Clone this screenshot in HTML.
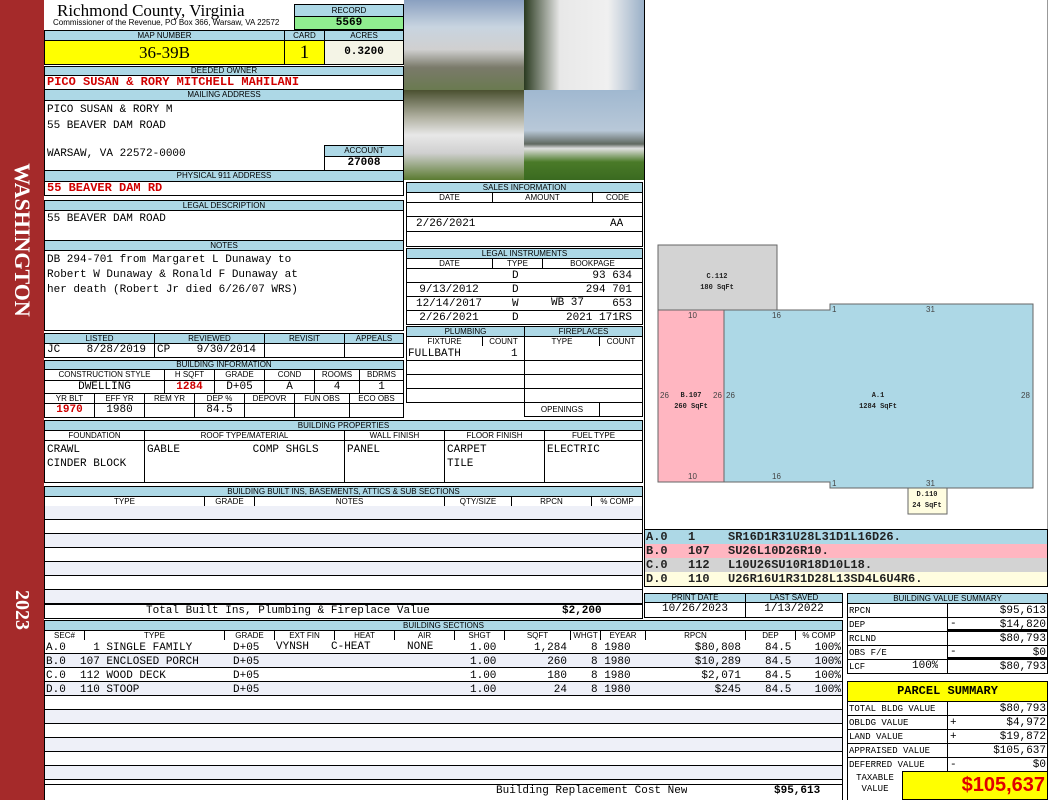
<!DOCTYPE html><html><head><meta charset="utf-8"><style>
body{margin:0;width:1050px;height:800px;position:relative;background:#fff;overflow:hidden;font-family:"Liberation Mono",monospace;}
.a{position:absolute;box-sizing:border-box;white-space:pre;overflow:hidden}
.h{background:#add8e6;border:1px solid #000;font:8px/9px "Liberation Sans",sans-serif;text-align:center;color:#000}
.c{border:1px solid #000;background:#fff}
.m{font-family:"Liberation Mono",monospace;font-size:11px;line-height:13px}
.r{color:#d00000;font-weight:bold}
.s{position:absolute;white-space:pre}
.rt{text-align:right}
</style></head><body>
<div class="a" style="left:0;top:0;width:44px;height:800px;background:#a52a2a"></div>
<div class="a" style="left:5px;top:150px;width:34px;height:180px;overflow:visible"><div style="position:absolute;left:34px;top:0;transform:rotate(90deg);transform-origin:0 0;width:180px;text-align:center;font:bold 22px/34px 'Liberation Serif',serif;color:#fff">WASHINGTON</div></div>
<div class="a" style="left:5px;top:590px;width:34px;height:40px;overflow:visible"><div style="position:absolute;left:34px;top:0;transform:rotate(90deg);transform-origin:0 0;width:40px;text-align:center;font:bold 20px/34px 'Liberation Serif',serif;color:#fff">2023</div></div>

<div class="a" style="left:57px;top:1px;font:17px/20px 'Liberation Serif',serif">Richmond County, Virginia</div>
<div class="a" style="left:53px;top:18px;font:8px/9px 'Liberation Sans',sans-serif">Commissioner of the Revenue, PO Box 366, Warsaw, VA 22572</div>
<div class="a h" style="left:294px;top:4px;width:110px;height:13px;line-height:11px">RECORD</div>
<div class="a c m" style="left:294px;top:16px;width:110px;height:14px;background:#90ee90;text-align:center;font-weight:bold;line-height:12px">5569</div>

<div class="a h" style="left:44px;top:30px;width:241px;height:11px">MAP NUMBER</div>
<div class="a h" style="left:284px;top:30px;width:41px;height:11px">CARD</div>
<div class="a h" style="left:324px;top:30px;width:80px;height:11px">ACRES</div>
<div class="a c" style="left:44px;top:40px;width:241px;height:25px;background:#ffff00;text-align:center;font:17px/23px 'Liberation Serif',serif">36-39B</div>
<div class="a c" style="left:284px;top:40px;width:41px;height:25px;background:#ffff00;text-align:center;font:19px/23px 'Liberation Serif',serif">1</div>
<div class="a c m" style="left:324px;top:40px;width:80px;height:25px;background:#f4f4e6;text-align:center;font-weight:bold;line-height:23px">0.3200</div>

<div class="a h" style="left:44px;top:66px;width:360px;height:10px;line-height:8px">DEEDED OWNER</div>
<div class="a c m r" style="left:44px;top:75px;width:360px;height:15px;padding-left:2px;font-size:12px">PICO SUSAN &amp; RORY MITCHELL MAHILANI</div>
<div class="a h" style="left:44px;top:89px;width:360px;height:12px;line-height:10px">MAILING ADDRESS</div>
<div class="a c" style="left:44px;top:100px;width:360px;height:71px"></div>
<div class="a m" style="left:47px;top:102px;line-height:16px">PICO SUSAN &amp; RORY M
55 BEAVER DAM ROAD</div>
<div class="a m" style="left:47px;top:148px">WARSAW, VA 22572-0000</div>
<div class="a h" style="left:324px;top:145px;width:80px;height:12px;line-height:10px">ACCOUNT</div>
<div class="a c m" style="left:324px;top:156px;width:80px;height:15px;text-align:center;font-weight:bold">27008</div>
<div class="a h" style="left:44px;top:170px;width:360px;height:12px;line-height:10px">PHYSICAL 911 ADDRESS</div>
<div class="a c m r" style="left:44px;top:181px;width:360px;height:15px;padding-left:2px;font-size:12px">55 BEAVER DAM RD</div>

<div class="a h" style="left:44px;top:200px;width:360px;height:11px">LEGAL DESCRIPTION</div>
<div class="a c m" style="left:44px;top:210px;width:360px;height:31px;padding:2px 2px">55 BEAVER DAM ROAD</div>
<div class="a h" style="left:44px;top:240px;width:360px;height:11px">NOTES</div>
<div class="a c m" style="left:44px;top:250px;width:360px;height:81px;padding:2px 2px;line-height:15px">DB 294-701 from Margaret L Dunaway to
Robert W Dunaway &amp; Ronald F Dunaway at
her death (Robert Jr died 6/26/07 WRS)</div>

<div class="a h" style="left:44px;top:333px;width:111px;height:11px">LISTED</div>
<div class="a h" style="left:154px;top:333px;width:111px;height:11px">REVIEWED</div>
<div class="a h" style="left:264px;top:333px;width:81px;height:11px">REVISIT</div>
<div class="a h" style="left:344px;top:333px;width:60px;height:11px">APPEALS</div>
<div class="a c m" style="left:44px;top:343px;width:111px;height:15px;padding-left:2px">JC    8/28/2019</div>
<div class="a c m" style="left:154px;top:343px;width:111px;height:15px;padding-left:2px">CP    9/30/2014</div>
<div class="a c" style="left:264px;top:343px;width:81px;height:15px"></div>
<div class="a c" style="left:344px;top:343px;width:60px;height:15px"></div>

<div class="a h" style="left:44px;top:360px;width:360px;height:10px;line-height:8px">BUILDING INFORMATION</div>
<div class="a h" style="left:44px;top:369px;width:121px;height:12px;background:#fff">CONSTRUCTION STYLE</div>
<div class="a h" style="left:164px;top:369px;width:51px;height:12px;background:#fff">H SQFT</div>
<div class="a h" style="left:214px;top:369px;width:51px;height:12px;background:#fff">GRADE</div>
<div class="a h" style="left:264px;top:369px;width:51px;height:12px;background:#fff">COND</div>
<div class="a h" style="left:314px;top:369px;width:46px;height:12px;background:#fff">ROOMS</div>
<div class="a h" style="left:359px;top:369px;width:45px;height:12px;background:#fff">BDRMS</div>
<div class="a c m" style="left:44px;top:380px;width:121px;height:14px;text-align:center;line-height:12px">DWELLING</div>
<div class="a c m r" style="left:164px;top:380px;width:51px;height:14px;text-align:center;line-height:12px">1284</div>
<div class="a c m" style="left:214px;top:380px;width:51px;height:14px;text-align:center;line-height:12px">D+05</div>
<div class="a c m" style="left:264px;top:380px;width:51px;height:14px;text-align:center;line-height:12px">A</div>
<div class="a c m" style="left:314px;top:380px;width:46px;height:14px;text-align:center;line-height:12px">4</div>
<div class="a c m" style="left:359px;top:380px;width:45px;height:14px;text-align:center;line-height:12px">1</div>
<div class="a h" style="left:44px;top:393px;width:51px;height:11px;background:#fff">YR BLT</div>
<div class="a h" style="left:94px;top:393px;width:51px;height:11px;background:#fff">EFF YR</div>
<div class="a h" style="left:144px;top:393px;width:51px;height:11px;background:#fff">REM YR</div>
<div class="a h" style="left:194px;top:393px;width:51px;height:11px;background:#fff">DEP %</div>
<div class="a h" style="left:244px;top:393px;width:51px;height:11px;background:#fff">DEPOVR</div>
<div class="a h" style="left:294px;top:393px;width:56px;height:11px;background:#fff">FUN OBS</div>
<div class="a h" style="left:349px;top:393px;width:55px;height:11px;background:#fff">ECO OBS</div>
<div class="a c m r" style="left:44px;top:403px;width:51px;height:15px;text-align:center">1970</div>
<div class="a c m" style="left:94px;top:403px;width:51px;height:15px;text-align:center">1980</div>
<div class="a c" style="left:144px;top:403px;width:51px;height:15px"></div>
<div class="a c m" style="left:194px;top:403px;width:51px;height:15px;text-align:center">84.5</div>
<div class="a c" style="left:244px;top:403px;width:51px;height:15px"></div>
<div class="a c" style="left:294px;top:403px;width:56px;height:15px"></div>
<div class="a c" style="left:349px;top:403px;width:55px;height:15px"></div>

<div class="a" style="left:404px;top:0;width:120px;height:90px;background:linear-gradient(#8aa0c0 0,#c8d4e0 30%,#d0d0d0 55%,#7a7a6a 75%,#6a7a50 100%)"></div>
<div class="a" style="left:524px;top:0;width:120px;height:90px;background:linear-gradient(90deg,#2a3a20,#e8e8e8 30%,#f0f0f0 70%,#9ab0c8)"></div>
<div class="a" style="left:404px;top:90px;width:120px;height:90px;background:linear-gradient(#4a5030 0,#b0b0a0 30%,#e8e8e8 50%,#d0d0d0 70%,#5a7a30 100%)"></div>
<div class="a" style="left:524px;top:90px;width:120px;height:90px;background:linear-gradient(#a0b8d0 0,#b8c8d8 45%,#606860 60%,#e0e0e0 65%,#4a7a28 80%,#3a6a20 100%)"></div>

<div class="a h" style="left:406px;top:182px;width:237px;height:11px">SALES INFORMATION</div>
<div class="a h" style="left:406px;top:192px;width:87px;height:11px;background:#fff">DATE</div>
<div class="a h" style="left:492px;top:192px;width:101px;height:11px;background:#fff">AMOUNT</div>
<div class="a h" style="left:592px;top:192px;width:51px;height:11px;background:#fff">CODE</div>
<div class="a c" style="left:406px;top:202px;width:237px;height:45px"></div>
<div class="a" style="left:406px;top:216px;width:237px;height:1px;background:#000"></div>
<div class="a" style="left:406px;top:231px;width:237px;height:1px;background:#000"></div>
<div class="a m" style="left:416px;top:218px">2/26/2021</div>
<div class="a m" style="left:610px;top:218px">AA</div>

<div class="a h" style="left:406px;top:248px;width:237px;height:11px">LEGAL INSTRUMENTS</div>
<div class="a h" style="left:406px;top:258px;width:87px;height:11px;background:#fff">DATE</div>
<div class="a h" style="left:492px;top:258px;width:51px;height:11px;background:#fff">TYPE</div>
<div class="a h" style="left:542px;top:258px;width:101px;height:11px;background:#fff">BOOKPAGE</div>
<div class="a c" style="left:406px;top:268px;width:237px;height:57px"></div>
<div class="a" style="left:406px;top:282px;width:237px;height:1px;background:#000"></div>
<div class="a" style="left:406px;top:296px;width:237px;height:1px;background:#000"></div>
<div class="a" style="left:406px;top:310px;width:237px;height:1px;background:#000"></div>
<div class="a m" style="left:406px;top:269px;width:86px;text-align:center;line-height:14px">
9/13/2012
12/14/2017
2/26/2021</div>
<div class="a m" style="left:512px;top:269px;line-height:14px">D
D
W
D</div>
<div class="a m" style="left:542px;top:269px;width:90px;text-align:right;line-height:14px">93 634
294 701
653
2021 171RS</div>
<div class="a m" style="left:551px;top:297px">WB 37</div>

<div class="a h" style="left:406px;top:326px;width:119px;height:11px">PLUMBING</div>
<div class="a h" style="left:524px;top:326px;width:119px;height:11px">FIREPLACES</div>
<div class="a h" style="left:406px;top:336px;width:77px;height:11px;background:#fff">FIXTURE</div>
<div class="a h" style="left:482px;top:336px;width:43px;height:11px;background:#fff">COUNT</div>
<div class="a h" style="left:524px;top:336px;width:76px;height:11px;background:#fff">TYPE</div>
<div class="a h" style="left:599px;top:336px;width:44px;height:11px;background:#fff">COUNT</div>
<div class="a c" style="left:406px;top:346px;width:119px;height:57px;border-top:0"></div>
<div class="a c" style="left:524px;top:346px;width:119px;height:71px;border-top:0"></div>
<div class="a" style="left:406px;top:360px;width:237px;height:1px;background:#000"></div>
<div class="a" style="left:406px;top:374px;width:237px;height:1px;background:#000"></div>
<div class="a" style="left:406px;top:388px;width:237px;height:1px;background:#000"></div>
<div class="a" style="left:524px;top:402px;width:119px;height:1px;background:#000"></div>
<div class="a m" style="left:408px;top:348px">FULLBATH</div>
<div class="a m" style="left:511px;top:348px">1</div>
<div class="a h" style="left:524px;top:402px;width:76px;height:15px;background:#fff;line-height:13px">OPENINGS</div>

<div class="a h" style="left:44px;top:420px;width:599px;height:11px">BUILDING PROPERTIES</div>
<div class="a h" style="left:44px;top:430px;width:101px;height:11px;background:#fff">FOUNDATION</div>
<div class="a h" style="left:144px;top:430px;width:201px;height:11px;background:#fff">ROOF TYPE/MATERIAL</div>
<div class="a h" style="left:344px;top:430px;width:101px;height:11px;background:#fff">WALL FINISH</div>
<div class="a h" style="left:444px;top:430px;width:101px;height:11px;background:#fff">FLOOR FINISH</div>
<div class="a h" style="left:544px;top:430px;width:99px;height:11px;background:#fff">FUEL TYPE</div>
<div class="a c m" style="left:44px;top:440px;width:101px;height:43px;padding:2px 2px;line-height:14px">CRAWL
CINDER BLOCK</div>
<div class="a c m" style="left:144px;top:440px;width:201px;height:43px;padding:2px 2px;line-height:14px">GABLE           COMP SHGLS</div>
<div class="a c m" style="left:344px;top:440px;width:101px;height:43px;padding:2px 2px;line-height:14px">PANEL</div>
<div class="a c m" style="left:444px;top:440px;width:101px;height:43px;padding:2px 2px;line-height:14px">CARPET
TILE</div>
<div class="a c m" style="left:544px;top:440px;width:99px;height:43px;padding:2px 2px;line-height:14px">ELECTRIC</div>

<div class="a h" style="left:44px;top:486px;width:599px;height:11px">BUILDING BUILT INS, BASEMENTS, ATTICS &amp; SUB SECTIONS</div>
<div class="a h" style="left:44px;top:496px;width:161px;height:11px;background:#fff">TYPE</div>
<div class="a h" style="left:204px;top:496px;width:51px;height:11px;background:#fff">GRADE</div>
<div class="a h" style="left:254px;top:496px;width:191px;height:11px;background:#fff">NOTES</div>
<div class="a h" style="left:444px;top:496px;width:68px;height:11px;background:#fff">QTY/SIZE</div>
<div class="a h" style="left:511px;top:496px;width:81px;height:11px;background:#fff">RPCN</div>
<div class="a h" style="left:591px;top:496px;width:52px;height:11px;background:#fff">% COMP</div>
<div class="a c" style="left:44px;top:506px;width:599px;height:113px;border-top:0;background:repeating-linear-gradient(#eef0f8 0,#eef0f8 13px,#000 13px,#000 14px,#fff 14px,#fff 27px,#000 27px,#000 28px)"></div>
<div class="a" style="left:44px;top:604px;width:599px;height:15px;border:1px solid #000;background:#fff"></div>
<div class="a m" style="left:146px;top:605px">Total Built Ins, Plumbing &amp; Fireplace Value</div>
<div class="a m" style="left:562px;top:605px;font-weight:bold">$2,200</div>

<div class="a h" style="left:44px;top:620px;width:799px;height:11px">BUILDING SECTIONS</div>
<div class="a h" style="left:44px;top:630px;width:41px;height:11px;background:#fff">SEC#</div>
<div class="a h" style="left:84px;top:630px;width:141px;height:11px;background:#fff">TYPE</div>
<div class="a h" style="left:224px;top:630px;width:51px;height:11px;background:#fff">GRADE</div>
<div class="a h" style="left:274px;top:630px;width:61px;height:11px;background:#fff">EXT FIN</div>
<div class="a h" style="left:334px;top:630px;width:61px;height:11px;background:#fff">HEAT</div>
<div class="a h" style="left:394px;top:630px;width:61px;height:11px;background:#fff">AIR</div>
<div class="a h" style="left:454px;top:630px;width:51px;height:11px;background:#fff">SHGT</div>
<div class="a h" style="left:504px;top:630px;width:67px;height:11px;background:#fff">SQFT</div>
<div class="a h" style="left:570px;top:630px;width:31px;height:11px;background:#fff">WHGT</div>
<div class="a h" style="left:600px;top:630px;width:46px;height:11px;background:#fff">EYEAR</div>
<div class="a h" style="left:645px;top:630px;width:101px;height:11px;background:#fff">RPCN</div>
<div class="a h" style="left:745px;top:630px;width:51px;height:11px;background:#fff">DEP</div>
<div class="a h" style="left:795px;top:630px;width:48px;height:11px;background:#fff">% COMP</div>
<div class="a c" style="left:44px;top:640px;width:799px;height:160px;border-top:0;background:repeating-linear-gradient(#fff 0,#fff 13px,#000 13px,#000 14px,#eef0f8 14px,#eef0f8 27px,#000 27px,#000 28px)"></div>
<div class="a m" style="left:46px;top:641px;line-height:14px">A.0
B.0
C.0
D.0</div>
<div class="a m" style="left:80px;top:641px;line-height:14px">  1 SINGLE FAMILY
107 ENCLOSED PORCH
112 WOOD DECK
110 STOOP</div>
<div class="a m" style="left:233px;top:641px;line-height:14px">D+05
D+05
D+05
D+05</div>
<div class="a m" style="left:276px;top:641px">VYNSH</div>
<div class="a m" style="left:331px;top:641px">C-HEAT</div>
<div class="a m" style="left:407px;top:641px">NONE</div>
<div class="a m" style="left:470px;top:641px;line-height:14px">1.00
1.00
1.00
1.00</div>
<div class="a m rt" style="left:500px;top:641px;width:67px;line-height:14px">1,284
260
180
24</div>
<div class="a m" style="left:591px;top:641px;line-height:14px">8 1980
8 1980
8 1980
8 1980</div>
<div class="a m rt" style="left:660px;top:641px;width:81px;line-height:14px">$80,808
$10,289
$2,071
$245</div>
<div class="a m" style="left:765px;top:641px;line-height:14px">84.5
84.5
84.5
84.5</div>
<div class="a m rt" style="left:800px;top:641px;width:41px;line-height:14px">100%
100%
100%
100%</div>
<div class="a" style="left:44px;top:784px;width:799px;height:16px;background:#fff;border:1px solid #000;border-bottom:0"></div>
<div class="a m" style="left:496px;top:785px">Building Replacement Cost New</div>
<div class="a m" style="left:774px;top:785px;font-weight:bold">$95,613</div>

<div class="a" style="left:644px;top:0;width:1px;height:530px;background:#000"></div>
<div class="a" style="left:1047px;top:0;width:1px;height:530px;background:#999"></div>
<svg class="a" style="left:644px;top:230px" width="404" height="300" viewBox="644 230 404 300" font-family="Liberation Sans" font-size="8">
<rect x="658" y="245" width="119" height="65" fill="#d3d3d3" stroke="#666"/>
<rect x="658" y="310" width="66" height="172" fill="#ffb6c1" stroke="#666"/>
<polygon points="724,310 830,310 830,304 1033,304 1033,488 830,488 830,482 724,482" fill="#add8e6" stroke="#666"/>
<rect x="908" y="488" width="39" height="26" fill="#fffde0" stroke="#666"/>
<g font-family="Liberation Mono" font-weight="bold" font-size="7" text-anchor="middle" fill="#222">
<text x="717" y="278">C.112</text><text x="717" y="289">180 SqFt</text>
<text x="691" y="397">B.107</text><text x="691" y="408">260 SqFt</text>
<text x="878" y="397">A.1</text><text x="878" y="408">1284 SqFt</text>
<text x="927" y="496">D.110</text><text x="927" y="507">24 SqFt</text></g>
<g fill="#444"><text x="688" y="318">10</text><text x="688" y="479">10</text><text x="772" y="318">16</text><text x="772" y="479">16</text>
<text x="926" y="312">31</text><text x="926" y="486">31</text><text x="660" y="398">26</text><text x="713" y="398">26</text><text x="726" y="398">26</text><text x="1021" y="398">28</text><text x="832" y="312">1</text><text x="832" y="486">1</text></g>
</svg>

<div class="a" style="left:644px;top:529px;width:404px;height:58px;border:1px solid #000"></div>
<div class="a" style="left:645px;top:530px;width:402px;height:14px;background:#add8e6"></div>
<div class="a" style="left:645px;top:544px;width:402px;height:14px;background:#ffb6c1"></div>
<div class="a" style="left:645px;top:558px;width:402px;height:14px;background:#d3d3d3"></div>
<div class="a" style="left:645px;top:572px;width:402px;height:14px;background:#fffde0"></div>
<div class="a m" style="left:646px;top:530px;font-size:12px;font-weight:bold;line-height:14px;color:#222">A.0
B.0
C.0
D.0</div>
<div class="a m" style="left:688px;top:530px;font-size:12px;font-weight:bold;line-height:14px;color:#222">1
107
112
110</div>
<div class="a m" style="left:728px;top:530px;font-size:12px;font-weight:bold;line-height:14px;color:#222">SR16D1R31U28L31D1L16D26.
SU26L10D26R10.
L10U26SU10R18D10L18.
U26R16U1R31D28L13SD4L6U4R6.</div>

<div class="a h" style="left:644px;top:593px;width:102px;height:10px;line-height:8px">PRINT DATE</div>
<div class="a h" style="left:745px;top:593px;width:98px;height:10px;line-height:8px">LAST SAVED</div>
<div class="a c m" style="left:644px;top:602px;width:102px;height:16px;text-align:center">10/26/2023</div>
<div class="a c m" style="left:745px;top:602px;width:98px;height:16px;text-align:center">1/13/2022</div>

<div class="a h" style="left:847px;top:593px;width:201px;height:11px;line-height:9px">BUILDING VALUE SUMMARY</div>
<div class="a" style="left:847px;top:603px;width:201px;height:71px;border:1px solid #000;background:repeating-linear-gradient(#fff 0,#fff 13px,#000 13px,#000 14px)"></div>
<div class="a" style="left:947px;top:603px;width:1px;height:71px;background:#000"></div>
<div class="a" style="left:947px;top:629px;width:100px;height:3px;background:#000"></div>
<div class="a" style="left:947px;top:657px;width:100px;height:3px;background:#000"></div>
<div class="a m" style="left:849px;top:604px;font-size:9px;line-height:14px">RPCN
DEP
RCLND
OBS F/E
LCF</div>
<div class="a m" style="left:912px;top:660px">100%</div>
<div class="a m rt" style="left:950px;top:604px;width:96px;line-height:14px">$95,613
$14,820
$80,793
$0
$80,793</div>
<div class="a m" style="left:950px;top:618px">-</div>
<div class="a m" style="left:950px;top:646px">-</div>

<div class="a" style="left:847px;top:681px;width:201px;height:21px;border:1px solid #000;background:#ffff00;text-align:center;font:bold 12px/19px 'Liberation Mono',monospace">PARCEL SUMMARY</div>
<div class="a" style="left:847px;top:701px;width:201px;height:99px;border:1px solid #000;background:repeating-linear-gradient(#fff 0,#fff 13px,#000 13px,#000 14px)"></div>
<div class="a" style="left:947px;top:701px;width:1px;height:70px;background:#000"></div>
<div class="a m" style="left:849px;top:702px;font-size:9px;line-height:14px">TOTAL BLDG VALUE
OBLDG VALUE
LAND VALUE
APPRAISED VALUE
DEFERRED VALUE</div>
<div class="a m rt" style="left:950px;top:702px;width:96px;line-height:14px">$80,793
$4,972
$19,872
$105,637
$0</div>
<div class="a m" style="left:950px;top:716px;line-height:14px">+
+

-</div>
<div class="a" style="left:848px;top:771px;width:199px;height:29px;background:#fff"></div>
<div class="a m" style="left:848px;top:773px;width:54px;text-align:center;font-size:9px;line-height:11px">TAXABLE
VALUE</div>
<div class="a" style="left:902px;top:771px;width:146px;height:29px;background:#ffff00;border:1px solid #000;text-align:right;padding-right:2px;font:bold 20px/27px 'Liberation Sans',sans-serif;color:#e00000">$105,637</div>
</body></html>
